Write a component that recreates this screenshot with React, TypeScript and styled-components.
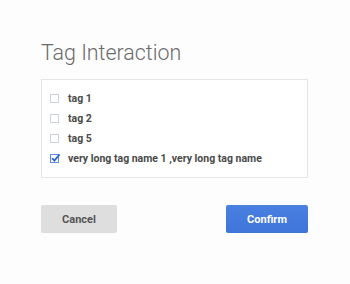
import React, { useState } from "react";
import styled, { createGlobalStyle } from "styled-components";

const GlobalStyle = createGlobalStyle`
  html, body {
    margin: 0;
    padding: 0;
    background: #fdfdfd;
  }
  body {
    font-family: Roboto, "Liberation Sans", Arial, sans-serif;
  }
`;

interface Tag {
  id: number;
  title: string;
}

const TagList: Tag[] = [
  { id: 1, title: "tag 1" },
  { id: 2, title: "tag 2" },
  { id: 5, title: "tag 5" },
  { id: 6, title: "very long tag name 1 ,very long tag name" },
];

const App: React.FC = () => {
  const [checked, setChecked] = useState<number[]>([6]);

  const toggle = (id: number) =>
    setChecked(
      checked.includes(id) ? checked.filter((v) => v !== id) : [...checked, id]
    );

  return (
    <>
      <GlobalStyle />
      <DialogWrapper>
        <Title>Tag Interaction</Title>
        <TagBox>
          {TagList.map(({ id, title }) => (
            <TagRow key={id} onClick={() => toggle(id)}>
              <CheckBox isChecked={checked.includes(id)}>
                {checked.includes(id) && (
                  <svg width="11" height="11" viewBox="0 0 11 11">
                    <path
                      d="M2 5.2 L4.4 7.6 L9.6 1.4"
                      fill="none"
                      stroke="#2f66d0"
                      strokeWidth="1.8"
                    />
                  </svg>
                )}
              </CheckBox>
              <p>{title}</p>
            </TagRow>
          ))}
        </TagBox>
        <ButtonRow>
          <Button variant="cancel">Cancel</Button>
          <Button variant="confirm">Confirm</Button>
        </ButtonRow>
      </DialogWrapper>
    </>
  );
};

const DialogWrapper = styled.div`
  width: 267px;
  padding: 40px 42px 0 41px;
  display: flex;
  flex-direction: column;
`;

const Title = styled.h1`
  margin: 0 0 13px;
  font-size: 21.4px;
  line-height: 26px;
  font-weight: 300;
  color: #6b6b6b;
`;

const TagBox = styled.div`
  border: 1px solid #e6e6e6;
  background: #ffffff;
  padding: 8px 8px 9px;
  display: flex;
  flex-direction: column;
`;

const TagRow = styled.div`
  display: flex;
  align-items: center;
  height: 20px;
  cursor: pointer;
  > p {
    margin: 0 0 0 9px;
    font-size: 10.5px;
    font-weight: 700;
    color: #4a4a4a;
  }
`;

const CheckBox = styled.span<{ isChecked: boolean }>`
  position: relative;
  box-sizing: border-box;
  width: 9px;
  height: 9px;
  border: 1px solid ${({ isChecked }) => (isChecked ? "#5b8ee6" : "#c9d2de")};
  background: #ffffff;
  > svg {
    position: absolute;
    left: -1px;
    top: -2px;
  }
`;

const ButtonRow = styled.div`
  display: flex;
  justify-content: space-between;
  margin-top: 27px;
`;

const Button = styled.button<{ variant: "cancel" | "confirm" }>`
  height: 28px;
  width: ${({ variant }) => (variant === "cancel" ? "76px" : "82px")};
  border: none;
  border-radius: 2px;
  font-family: Roboto, "Liberation Sans", Arial, sans-serif;
  font-size: 11px;
  font-weight: 700;
  cursor: pointer;
  background: ${({ variant }) =>
    variant === "cancel" ? "#dedede" : "linear-gradient(#4a80e2, #3f74d8)"};
  color: ${({ variant }) => (variant === "cancel" ? "#555555" : "#ffffff")};
  box-shadow: ${({ variant }) =>
    variant === "cancel" ? "none" : "0 1px 1px rgba(0, 0, 0, 0.12)"};
`;

export default App;
